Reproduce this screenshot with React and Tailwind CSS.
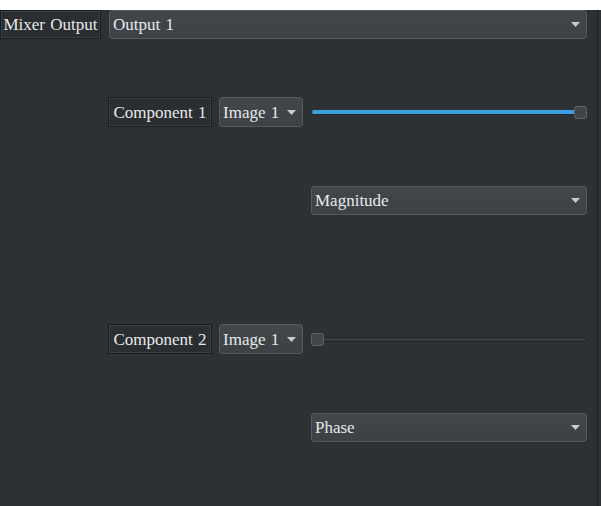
import React from "react";

const font = {
  fontFamily: '"Liberation Serif", "DejaVu Serif", serif',
  wordSpacing: "1px",
};

const Arrow = () => (
  <svg width="9" height="5" viewBox="0 0 9 5" className="shrink-0">
    <path d="M0 0 L9 0 L4.5 5 Z" fill="#c9cbcd" />
  </svg>
);

const Combo = ({ text, className = "" }) => (
  <div
    className={`flex items-center justify-between rounded-[3px] border border-[#54595e] bg-[linear-gradient(#42474b,#3c4145)] pl-[3px] pr-[6px] text-[17px] text-[#e8e9ea] ${className}`}
  >
    <span className="leading-none">{text}</span>
    <Arrow />
  </div>
);

const Label = ({ text, className = "" }) => (
  <div
    className={`flex items-center justify-center border border-[#191c1e] bg-[#2a2e31] text-[17px] text-[#e8e9ea] shadow-[inset_0_0_0_1px_#3a3f43] ${className}`}
  >
    <span className="leading-none">{text}</span>
  </div>
);

const Slider = ({ value }) => (
  <div className="relative flex h-[30px] w-[276px] items-center">
    <div className="h-[5px] w-full rounded-[2px] border border-[#222528] bg-[#363b3f]" />
    {value > 0 && (
      <div
        className="absolute left-[1px] top-[13px] h-[4px] rounded-[2px] bg-[#3d9ee0]"
        style={{ width: `${value * 264}px` }}
      />
    )}
    <div
      className="absolute top-[9px] h-[13px] w-[13px] rounded-[3px] border border-[#5e6367] bg-[#404549]"
      style={{ left: `${value * 263}px` }}
    />
  </div>
);

const ComponentRow = ({ n, value }) => (
  <div className="flex h-[30px] items-center pl-[108px]">
    <Label text={`Component ${n}`} className="h-[30px] w-[104px]" />
    <Combo text="Image 1" className="ml-[7px] h-[30px] w-[84px]" />
    <div className="ml-[8px]">
      <Slider value={value} />
    </div>
  </div>
);

export default function App() {
  return (
    <div className="h-[506px] w-[601px] bg-[#2d3134]" style={font}>
      <div className="h-[503px] w-[598px] border-b border-r border-[#1c1f21]">
        <div className="mt-[10px] flex h-[29px] items-center">
          <Label text="Mixer Output" className="h-[29px] w-[101px]" />
          <Combo text="Output 1" className="ml-[8px] h-[29px] w-[478px]" />
        </div>

        <div className="mt-[58px]">
          <ComponentRow n={1} value={1} />
        </div>

        <div className="mt-[59px] flex pl-[311px]">
          <Combo text="Magnitude" className="h-[29px] w-[276px]" />
        </div>

        <div className="mt-[109px]">
          <ComponentRow n={2} value={0} />
        </div>

        <div className="mt-[59px] flex pl-[311px]">
          <Combo text="Phase" className="h-[29px] w-[276px]" />
        </div>
      </div>
    </div>
  );
}
